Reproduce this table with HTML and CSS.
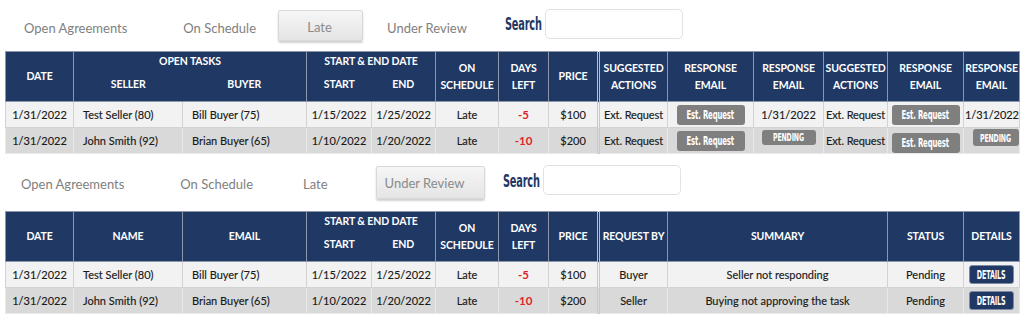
FILE: index.html
```html
<!DOCTYPE html>
<html lang="en">
<head>
<meta charset="utf-8">
<title>Agreements</title>
<link rel="stylesheet" href="styles.css">
</head>
<body>
<section class="panel panel-a">
  <div class="toolbar toolbar-a">
    <span class="tab">Open Agreements</span>
    <span class="tab">On Schedule</span>
    <span class="tab tab-active">Late</span>
    <span class="tab">Under Review</span>
    <span class="search-label"><span>Search</span></span>
    <input class="search-box" type="text" aria-label="Search">
  </div>
  <table class="grid">
    <colgroup>
      <col style="width:68px"><col style="width:109px"><col style="width:124px"><col style="width:65px"><col style="width:64px"><col style="width:63px"><col style="width:50px"><col style="width:50px"><col style="width:69px"><col style="width:86px"><col style="width:70px"><col style="width:64px"><col style="width:76px"><col style="width:56px">
    </colgroup>
    <thead>
      <tr class="hr1">
        <th rowspan="2">DATE</th>
        <th colspan="2" class="grp">OPEN TASKS</th>
        <th colspan="2" class="grp">START &amp; END DATE</th>
        <th rowspan="2">ON<br>SCHEDULE</th>
        <th rowspan="2">DAYS<br>LEFT</th>
        <th rowspan="2">PRICE</th>
        <th rowspan="2" class="sep">SUGGESTED<br>ACTIONS</th>
        <th rowspan="2">RESPONSE<br>EMAIL</th>
        <th rowspan="2">RESPONSE<br>EMAIL</th>
        <th rowspan="2">SUGGESTED<br>ACTIONS</th>
        <th rowspan="2">RESPONSE<br>EMAIL</th>
        <th rowspan="2">RESPONSE<br>EMAIL</th>
      </tr>
      <tr class="hr2">
        <th class="sub sub-l">SELLER</th>
        <th class="sub sub-r">BUYER</th>
        <th class="sub sub-l">START</th>
        <th class="sub sub-r">END</th>
      </tr>
    </thead>
    <tbody>
      <tr class="row-light">
        <td>1/31/2022</td>
        <td class="left">Test Seller (80)</td>
        <td class="left">Bill Buyer (75)</td>
        <td>1/15/2022</td>
        <td>1/25/2022</td>
        <td>Late</td>
        <td class="neg">-5</td>
        <td>$100</td>
        <td class="sep tight">Ext. Request</td>
        <td><span class="btn btn-grey"><span>Est. Request</span></span></td>
        <td>1/31/2022</td>
        <td class="tight">Ext. Request</td>
        <td><span class="btn btn-grey"><span>Est. Request</span></span></td>
        <td class="tight">1/31/2022</td>
      </tr>
      <tr class="row-dark">
        <td>1/31/2022</td>
        <td class="left">John Smith (92)</td>
        <td class="left">Brian Buyer (65)</td>
        <td>1/10/2022</td>
        <td>1/20/2022</td>
        <td>Late</td>
        <td class="neg">-10</td>
        <td>$200</td>
        <td class="sep tight">Ext. Request</td>
        <td><span class="btn btn-grey"><span>Est. Request</span></span></td>
        <td class="cell-top"><span class="btn btn-pending"><span>PENDING</span></span></td>
        <td class="tight">Ext. Request</td>
        <td class="cell-bottom"><span class="btn btn-grey"><span>Est. Request</span></span></td>
        <td class="cell-top cell-shift"><span class="btn btn-pending btn-pending-sm"><span>PENDING</span></span></td>
      </tr>
    </tbody>
  </table>
</section>

<section class="panel panel-b">
  <div class="toolbar toolbar-b">
    <span class="tab">Open Agreements</span>
    <span class="tab">On Schedule</span>
    <span class="tab">Late</span>
    <span class="tab tab-active">Under Review</span>
    <span class="search-label"><span>Search</span></span>
    <input class="search-box" type="text" aria-label="Search">
  </div>
  <table class="grid">
    <colgroup>
      <col style="width:68px"><col style="width:109px"><col style="width:124px"><col style="width:65px"><col style="width:64px"><col style="width:63px"><col style="width:50px"><col style="width:50px"><col style="width:69px"><col style="width:220px"><col style="width:76px"><col style="width:56px">
    </colgroup>
    <thead>
      <tr class="hr1">
        <th rowspan="2">DATE</th>
        <th rowspan="2">NAME</th>
        <th rowspan="2">EMAIL</th>
        <th colspan="2" class="grp">START &amp; END DATE</th>
        <th rowspan="2">ON<br>SCHEDULE</th>
        <th rowspan="2">DAYS<br>LEFT</th>
        <th rowspan="2">PRICE</th>
        <th rowspan="2" class="sep">REQUEST BY</th>
        <th rowspan="2">SUMMARY</th>
        <th rowspan="2">STATUS</th>
        <th rowspan="2">DETAILS</th>
      </tr>
      <tr class="hr2">
        <th class="sub sub-l">START</th>
        <th class="sub sub-r">END</th>
      </tr>
    </thead>
    <tbody>
      <tr class="row-light">
        <td>1/31/2022</td>
        <td class="left">Test Seller (80)</td>
        <td class="left">Bill Buyer (75)</td>
        <td>1/15/2022</td>
        <td>1/25/2022</td>
        <td>Late</td>
        <td class="neg">-5</td>
        <td>$100</td>
        <td class="sep">Buyer</td>
        <td>Seller not responding</td>
        <td>Pending</td>
        <td><span class="btn btn-navy"><span>DETAILS</span></span></td>
      </tr>
      <tr class="row-dark">
        <td>1/31/2022</td>
        <td class="left">John Smith (92)</td>
        <td class="left">Brian Buyer (65)</td>
        <td>1/10/2022</td>
        <td>1/20/2022</td>
        <td>Late</td>
        <td class="neg">-10</td>
        <td>$200</td>
        <td class="sep">Seller</td>
        <td>Buying not approving the task</td>
        <td>Pending</td>
        <td><span class="btn btn-navy"><span>DETAILS</span></span></td>
      </tr>
    </tbody>
  </table>
</section>
</body>
</html>
```

FILE: styles.css
```css
* { box-sizing: border-box; }

html, body {
  margin: 0;
  padding: 0;
  background: #ffffff;
}

body {
  font-family: Lato, "Open Sans", "Liberation Sans", sans-serif;
  color: #1e1e1e;
  padding-top: 9px;
}

/* ---------- toolbar ---------- */
.toolbar {
  display: flex;
  align-items: center;
  height: 33px;
}

.toolbar-a { padding-left: 24px; }
.toolbar-b { padding-left: 21px; height: 34px; }

.tab {
  font-size: 13px;
  color: #808080;
  white-space: nowrap;
  line-height: 1;
  padding-top: 5px;
}

.tab-active {
  display: flex;
  align-items: center;
  height: 31px;
  padding-top: 3px;
  background: linear-gradient(#f6f6f6, #e5e5e5);
  border: 1px solid #d8d8d8;
  border-radius: 2px;
  box-shadow: 0 2px 2px rgba(0, 0, 0, 0.18);
  color: #8a8a8a;
}

.toolbar-a .tab:nth-child(1) { margin-right: 56px; }
.toolbar-a .tab:nth-child(2) { margin-right: 22px; }
.toolbar-a .tab:nth-child(3) { margin-right: 24px; width: 85px; justify-content: center; padding-right: 2px; }
.toolbar-a .tab:nth-child(4) { margin-right: 38px; }

.toolbar-b .tab:nth-child(1) { margin-right: 56px; }
.toolbar-b .tab:nth-child(2) { margin-right: 50px; }
.toolbar-b .tab:nth-child(3) { margin-right: 48px; }
.toolbar-b .tab:nth-child(4) { margin-right: 18px; width: 109px; height: 33px; padding-left: 8px; }

.search-label {
  display: inline-block;
  width: 40px;
  white-space: nowrap;
  color: #1f3864;
  font-family: "DejaVu Sans Condensed", "DejaVu Sans", sans-serif;
  font-stretch: condensed;
  font-weight: bold;
  font-size: 17px;
  line-height: 1;
  margin-top: -2px;
}

.search-label span {
  display: inline-block;
  transform: scaleX(0.64);
  transform-origin: left center;
  letter-spacing: -0.3px;
}

.search-box {
  width: 138px;
  height: 30px;
  margin: -3px 0 0 0;
  padding: 0;
  border: 1px solid #e2e2e2;
  border-radius: 5px;
  background: #ffffff;
  outline: none;
}

.toolbar-b .search-box { height: 30px; margin-top: -4px; }

/* ---------- table ---------- */
.grid {
  margin: 9px 0 0 5px;
  width: 1014px;
  table-layout: fixed;
  border-collapse: collapse;
}

.panel-b { margin-top: 11px; }
.panel-b .grid { margin-top: 12px; }

.grid th {
  background: #1f3864;
  color: #ffffff;
  font-weight: bold;
  font-size: 10.5px;
  line-height: 16.5px;
  text-align: center;
  vertical-align: middle;
  padding: 0;
  border: 1px solid #8d96aa;
  white-space: nowrap;
  letter-spacing: -0.1px;
}

.grid .hr1 { height: 17px; }
.grid .hr2 { height: 32px; }

.grid th.grp {
  border-bottom-style: hidden;
  padding-top: 1px;
}

.grid th.sub {
  border-top-style: hidden;
  padding-bottom: 2px;
}

.grid th.sub-l { border-right-style: hidden; }
.grid th.sub-r { border-left-style: hidden; }

.grid th.sep,
.grid td.sep {
  border-left: 3px double #b9bfca;
}

.grid td.sep { border-left-color: #c9c9c9; }

.grid tbody tr { height: 26px; }

.grid td {
  font-size: 11px;
  text-align: center;
  vertical-align: middle;
  padding: 0 3px;
  white-space: nowrap;
  border: 1px solid #d2d2d2;
  color: #1a1a1a;
  -webkit-text-stroke: 0.15px #1a1a1a;
}

.row-light td { background: #f2f2f2; }
.row-dark td { background: #d9d9d9; border-color: #e9e9e9; }

.grid td.left {
  text-align: left;
  padding-left: 9px;
}

.grid td.tight { padding: 0 1px; letter-spacing: -0.1px; }

.grid td.neg {
  color: #e0242a;
  -webkit-text-stroke: 0;
  font-weight: bold;
  font-size: 11.5px;
}

.grid td.cell-top {
  vertical-align: top;
  padding-top: 1px;
}

.grid td.cell-bottom {
  vertical-align: bottom;
  padding-bottom: 0;
}

.grid td.cell-shift { padding-left: 8px; padding-right: 0; }

/* ---------- buttons ---------- */
.btn {
  display: inline-flex;
  align-items: center;
  justify-content: center;
  vertical-align: middle;
  color: #ffffff;
  -webkit-text-stroke: 0;
  font-family: "DejaVu Sans Condensed", "DejaVu Sans", sans-serif;
  font-stretch: condensed;
  font-weight: bold;
  border-radius: 3px;
  overflow: hidden;
  white-space: nowrap;
  letter-spacing: -0.2px;
}

.btn span { display: inline-block; }

.btn-grey {
  width: 68px;
  height: 20px;
  background: #7f7f7f;
  font-size: 12px;
}

.btn-grey span { transform: scaleX(0.64); }

.btn-pending {
  width: 54px;
  height: 15px;
  background: #7f7f7f;
  font-size: 10.5px;
}

.btn-pending span { transform: scaleX(0.66); }

.btn-pending-sm {
  width: 46px;
  height: 17px;
}

.btn-navy {
  width: 45px;
  height: 19px;
  background: #1f3864;
  border: 1px solid #7d8aa6;
  border-radius: 3px;
  font-size: 11.5px;
}

.btn-navy span { transform: scaleX(0.62); }
```
